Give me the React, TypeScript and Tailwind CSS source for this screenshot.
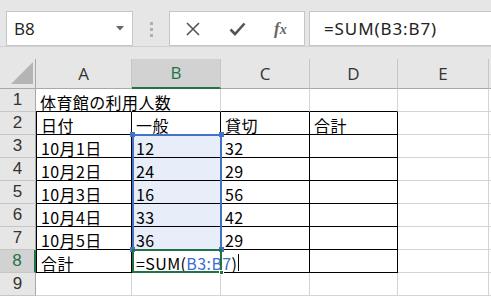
import type { ReactNode } from 'react'

const COLS = ['A', 'B', 'C', 'D', 'E']

const ROWS: string[][] = [
  ['体育館の利用人数', '', '', '', ''],
  ['日付', '一般', '貸切', '合計', ''],
  ['10月1日', '12', '32', '', ''],
  ['10月2日', '24', '29', '', ''],
  ['10月3日', '16', '56', '', ''],
  ['10月4日', '33', '42', '', ''],
  ['10月5日', '36', '29', '', ''],
  ['合計', '', '', '', ''],
  ['', '', '', '', ''],
]

const cellFont = { fontFamily: '"Noto Sans CJK JP", "Liberation Sans", sans-serif' }
const headFont = { fontFamily: '"Liberation Sans", "Noto Sans", sans-serif' }

function XIcon() {
  return (
    <svg width="14" height="14" viewBox="0 0 14 14" fill="none" stroke="#555" strokeWidth="1.6">
      <path d="M1 1 L13 13 M13 1 L1 13" />
    </svg>
  )
}

function CheckIcon() {
  return (
    <svg width="17" height="14" viewBox="0 0 17 14" fill="none" stroke="#555" strokeWidth="2.6">
      <path d="M1.5 7.5 L6 12 L15.5 1.5" />
    </svg>
  )
}

function cellClass(r: number, c: number): string {
  // r: 1-based row, c: 0-based column (A=0)
  const inTable = r >= 2 && r <= 8 && c <= 3
  const bottomBlack = r >= 1 && r <= 8 && c <= 3
  const selected = c === 1 && r >= 3 && r <= 7
  const overflows = (r === 1 && c === 0) || (r === 8 && c === 1)
  let cls = 'relative flex items-center border-b border-r pl-[4px] pt-[3px] text-[16px] leading-none tracking-[0.4px] text-black whitespace-nowrap'
  cls += bottomBlack ? ' border-b-black' : ' border-b-[#d4d4d4]'
  if (r === 1 && c === 0) cls += ' border-r-white'
  else cls += inTable ? ' border-r-black' : ' border-r-[#d4d4d4]'
  if (c === 0 && inTable) cls += ' border-l border-l-black pl-[3px]'
  cls += selected ? ' bg-[#e7eef9]' : ' bg-white'
  if (overflows) cls += ' z-10'
  return cls
}

export default function App() {
  const cells: ReactNode[] = []

  // header row
  cells.push(
    <div key="corner" className="relative border-b border-r border-b-[#a8a8a8] border-r-[#a8a8a8] bg-[#e6e6e6]">
      <svg className="absolute left-[11px] top-[3px]" width="23" height="23" viewBox="0 0 23 23">
        <polygon points="22,0 22,22 0,22" fill="#b4b4b4" />
      </svg>
    </div>,
  )
  COLS.forEach((col) => {
    const active = col === 'B'
    cells.push(
      <div
        key={`h-${col}`}
        className={
          active
            ? 'flex items-center justify-center border-r border-b-2 border-r-[#c6c6c6] border-b-[#217346] bg-[#d2d2d2] text-[17px] text-[#217346]'
            : 'flex items-center justify-center border-r border-b border-r-[#c6c6c6] border-b-[#a8a8a8] bg-[#e6e6e6] text-[17px] text-[#333]'
        }
        style={{ fontFamily: '"Open Sans", "Noto Sans", sans-serif' }}
      >
        {col}
      </div>,
    )
  })
  cells.push(<div key="h-rest" className="border-b border-b-[#a8a8a8] bg-[#e6e6e6]" />)

  ROWS.forEach((row, i) => {
    const r = i + 1
    const active = r === 8
    cells.push(
      <div
        key={`rh-${r}`}
        className={
          active
            ? 'flex items-center justify-center border-b border-r-2 border-b-[#c6c6c6] border-r-[#217346] bg-[#d2d2d2] pb-[2px] text-[17px] leading-none text-[#217346]'
            : 'flex items-center justify-center border-b border-r border-b-[#c6c6c6] border-r-[#a8a8a8] bg-[#e6e6e6] pb-[2px] text-[17px] leading-none text-[#333]'
        }
        style={headFont}
      >
        {r}
      </div>,
    )
    row.forEach((val, c) => {
      cells.push(
        <div key={`c-${r}-${c}`} className={cellClass(r, c)} style={cellFont}>
          {r === 8 && c === 1 ? (
            <span className="flex items-center">
              =SUM(<span className="text-[#3a6fcf]">B3:B7</span>)
              <span className="ml-[1px] inline-block h-[17px] w-px bg-black" />
            </span>
          ) : (
            val
          )}
        </div>,
      )
    })
    cells.push(<div key={`rest-${r}`} className="border-b border-b-[#d4d4d4] bg-white" />)
  })

  return (
    <div className="h-[296px] w-[491px] overflow-hidden bg-[#e6e6e6]">
      {/* formula bar */}
      <div className="flex h-[47px] items-start border-b border-b-[#d0d0d0] pt-[11px]">
        <div className="ml-[6px] flex h-[35px] w-[127px] items-center justify-between border border-[#c6c6c6] bg-white pl-[7px] pr-[8px]">
          <span className="text-[17px] text-[#222]" style={{ fontFamily: '"Open Sans", "Noto Sans", sans-serif' }}>
            B8
          </span>
          <svg width="8" height="5" viewBox="0 0 8 5">
            <polygon points="0,0 8,0 4,4.5" fill="#666" />
          </svg>
        </div>
        <div className="ml-[17px] mt-[11px] flex flex-col gap-[3px]">
          <span className="h-[3px] w-[3px] bg-[#b0b0b0]" />
          <span className="h-[3px] w-[3px] bg-[#b0b0b0]" />
          <span className="h-[3px] w-[3px] bg-[#b0b0b0]" />
        </div>
        <div className="ml-[16px] flex h-[35px] w-[136px] items-center border border-[#c6c6c6] bg-white">
          <span className="ml-[16px]">
            <XIcon />
          </span>
          <span className="ml-[29px]">
            <CheckIcon />
          </span>
          <span
            className="ml-[28px] text-[17px] font-bold italic text-[#666]"
            style={{ fontFamily: '"Liberation Serif", serif' }}
          >
            f<span className="text-[14px]">x</span>
          </span>
        </div>
        <div className="ml-[4px] flex h-[35px] flex-1 items-center border border-r-0 border-[#c6c6c6] bg-white pl-[14px]">
          <span
            className="text-[17px] tracking-[0.9px] text-[#222]"
            style={{ fontFamily: '"Noto Sans", "Open Sans", sans-serif' }}
          >
            =SUM(B3:B7)
          </span>
        </div>
      </div>

      <div className="h-[12px]" />

      {/* sheet grid */}
      <div className="relative grid grid-cols-[36px_96px_89px_89px_88px_91px_1fr] grid-rows-[30px_repeat(9,23px)]">
        {cells}

        {/* B3:B7 range selection */}
        <div className="pointer-events-none absolute left-[132px] top-[75px] z-20 h-[117px] w-[90px] border-2 border-[#4472c4]" />
        <span className="absolute left-[130px] top-[73px] z-20 h-[5px] w-[5px] bg-[#4472c4]" />
        <span className="absolute left-[219px] top-[73px] z-20 h-[5px] w-[5px] bg-[#4472c4]" />
        <span className="absolute left-[130px] top-[188px] z-20 h-[5px] w-[5px] bg-[#4472c4]" />
        <span className="absolute left-[219px] top-[188px] z-20 h-[5px] w-[5px] bg-[#4472c4]" />

        {/* active cell B8 */}
        <div className="pointer-events-none absolute left-[132px] top-[190px] z-20 h-[24px] w-[90px] border-2 border-[#217346]" />
        <span className="absolute left-[219px] top-[211px] z-20 h-[5px] w-[5px] border border-white bg-[#217346]" />
      </div>
    </div>
  )
}
